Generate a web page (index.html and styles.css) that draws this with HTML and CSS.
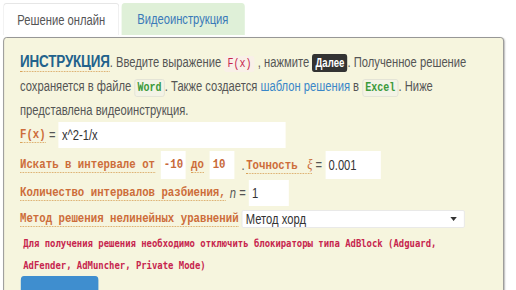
FILE: index.html
```html
<!DOCTYPE html>
<html lang="ru">
<head>
<meta charset="utf-8">
<link rel="stylesheet" href="styles.css">
</head>
<body>
<div class="page">
  <div class="tabs">
    <div class="tab active">Решение онлайн</div>
    <div class="tab video">Видеоинструкция</div>
  </div>
  <div class="panel">
    <p class="intro"><span class="title">ИНСТРУКЦИЯ</span>. Введите выражение <code class="fx">F(x)</code> , нажмите <kbd>Далее</kbd>. Полученное решение<br>сохраняется в файле <code class="file">Word</code>. Также создается <a class="link">шаблон решения</a> в <code class="file">Excel</code>. Ниже<br>представлена видеоинструкция.</p>
    <div class="row r1"><span class="lbl">F(x)</span><span class="eq">=</span><span class="inp w-fx">x^2-1/x</span></div>
    <div class="row r2"><span class="lbl">Искать в интервале от</span><span class="inp mono w-a">-10</span><span class="lbl">до</span><span class="inp mono w-b">10</span><span class="dot">.</span><span class="lbl">Точность <i class="xi">ξ</i></span><span class="eq">=</span><span class="inp w-eps">0.001</span></div>
    <div class="row r3"><span class="lbl">Количество интервалов разбиения,</span><i class="n">n</i><span class="eq">=</span><span class="inp w-n">1</span></div>
    <div class="row r4"><span class="lbl">Метод решения нелинейных уравнений</span><span class="select">Метод хорд<span class="caret"></span></span></div>
    <p class="warn">Для получения решения необходимо отключить блокираторы типа AdBlock (Adguard,<br>AdFender, AdMuncher, Private Mode)</p>
    <div class="btn">Далее</div>
  </div>
</div>
</body>
</html>
```
FILE: styles.css
```css
* { box-sizing: border-box; }
html, body { margin: 0; padding: 0; background: #fff; overflow: hidden; }
body { width: 516px; height: 290px; font-family: "Liberation Sans", Arial, sans-serif; color: #555; }
.page { width: 645px; height: 362px; overflow: hidden; transform: scaleX(0.8); transform-origin: 0 0; }
.tabs { display: flex; gap: 2.5px; padding: 3px 0 0 4px; height: 37px; }
.tab { height: 32px; line-height: 32px; border-radius: 4px 4px 0 0; font-size: 14px; text-align: center; }
.tab.active { width: 145px; background: #fff; border: 1px solid #e6e6e6; border-bottom: none; color: #555; }
.tab.video { width: 154px; background: #dff0d8; color: #3a7ab8; }
.panel { margin-left: 4px; width: 626px; height: 270px; background: #f6f5de; border: 1px solid #8c8c8c; border-radius: 4px; padding: 12px 16px 0 20px; box-shadow: 1px 1px 2px rgba(0,0,0,0.25); }
.intro { margin: 0; height: 72px; line-height: 24px; font-size: 14px; color: #555; white-space: nowrap; }
.title { font-weight: bold; font-size: 16.8px; line-height: 1; color: #22628c; letter-spacing: -0.2px; border-bottom: 1px dotted #d9a35a; }
code { font-family: "Liberation Mono", "Courier New", monospace; font-size: 12.5px; line-height: 1; padding: 1px 3px; border-radius: 3px; }
.fx { color: #c7254e; background: #f9f0e8; padding: 1px 4px; }
.file { color: #3b9a3b; font-weight: bold; background: #f3f3e6; border: 1px solid #e2e2d4; }
kbd { font-family: "Liberation Sans", Arial, sans-serif; font-size: 12px; line-height: 1; font-weight: bold; color: #fff; background: #333; padding: 2px 4px; border-radius: 3px; }
.link { color: #3a87c8; }
.row { display: flex; align-items: center; white-space: nowrap; }
.lbl { font-family: "Liberation Mono", "Courier New", monospace; font-size: 13.4px; font-weight: bold; color: #cd6d3a; border-bottom: 1px dotted #d9a35a; line-height: 14px; }
.eq { margin: 0 4px; color: #555; font-size: 14px; }
.dot { margin: 0 2px; font-size: 14px; }
.inp { display: inline-block; background: #fff; color: #333; padding: 0 4px; font-size: 14px; }
.inp.mono { font-family: "Liberation Mono", "Courier New", monospace; font-weight: bold; color: #c8693a; font-size: 13.4px; margin: 0 7px; }
.r1 { height: 26px; }
.r1 .inp { height: 26px; line-height: 26px; }
.w-fx { width: 284px; }
.r2 { height: 28px; margin-top: 3px; }
.r2 .inp { height: 28px; line-height: 28px; }
.w-a { width: 31px; }
.w-b { width: 31px; }
.w-eps { width: 69px; }
.xi { font-family: "Liberation Serif", serif; font-weight: normal; color: #c86c3a; font-size: 15px; margin-left: 4px; }
.r3 { height: 26px; margin-top: 1px; }
.r3 .inp { height: 26px; line-height: 26px; }
.n { margin-left: 5px; color: #555; font-size: 14px; }
.w-n { width: 50px; }
.r4 { height: 20px; margin-top: 3px; }
.select { position: relative; display: inline-block; width: 279px; height: 18px; line-height: 16px; font-size: 14px; background: #fff; color: #333; padding-left: 4px; margin-left: 4px; border-radius: 2px; border: 1px solid #e6e6e6; }
.caret { position: absolute; right: 9px; top: 6px; border-left: 4px solid transparent; border-right: 4px solid transparent; border-top: 4px solid #333; }
.warn { margin: 4px 0 0 4px; font-family: "DejaVu Sans Mono", monospace; font-weight: bold; font-size: 11.15px; color: #c7254e; line-height: 22px; white-space: nowrap; }
.btn { margin-top: -1px; margin-left: 1px; width: 97px; height: 40px; background: #3f8ecf; border-radius: 4px; color: #fff; padding-top: 20px; text-align: center; font-size: 14px; }
```
